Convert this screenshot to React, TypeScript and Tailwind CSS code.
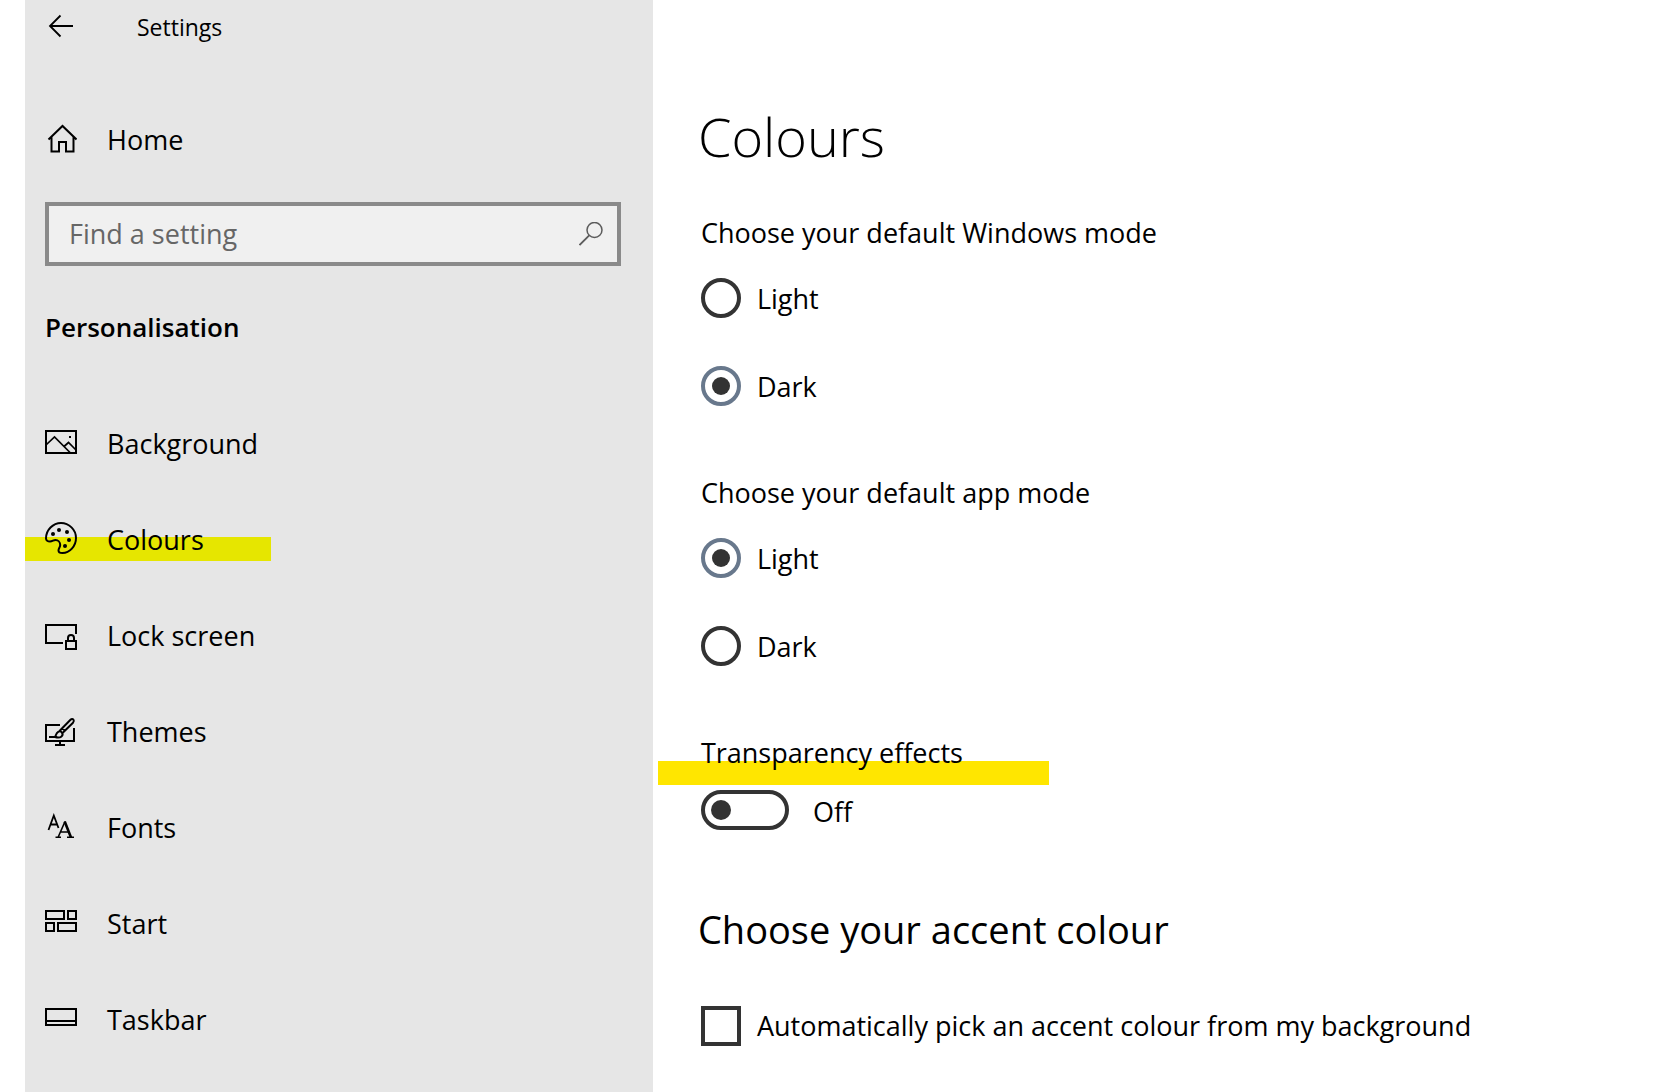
import React from "react";

type IconProps = { children: React.ReactNode };

function Icon({ children }: IconProps) {
  return (
    <svg
      viewBox="0 0 32 32"
      className="size-8 shrink-0"
      fill="none"
      stroke="currentColor"
      strokeWidth={2}
      aria-hidden="true"
    >
      {children}
    </svg>
  );
}

const BackIcon = () => (
  <Icon>
    <path d="M28 16H5M15.500 5.500L5 16l10.500 10.500" strokeWidth={1.8} />
  </Icon>
);

const HomeIcon = () => (
  <Icon>
    <path d="M3.500 16.500L17.500 3l14 13.500M6.500 14v14.500H14V19h7v9.500h7.500V14" />
  </Icon>
);

const PictureIcon = () => (
  <Icon>
    <path d="M1 5h30v22H1z" />
    <path d="M1.500 18.500L9.500 11 25.500 27M19 20.500l4.500-4 7.500 7.500" strokeWidth={1.7} />
    <path d="M24 11h2" />
  </Icon>
);

const PaletteIcon = () => (
  <Icon>
    <path d="M1 16.500C1 8 8 1 16 1s15 6.700 15 15-6.500 15-13.500 15c-2.500 0-4-1-4-2.500 0-2 1.700-3.500 1.700-5.500 0-3-2.200-5-4.700-5-2.200 0-3 1.500-5.500 1.500-2.300 0-4-1-4-3z" />
    <g fill="currentColor" stroke="none">
      <circle cx="8" cy="12" r="2" />
      <circle cx="14" cy="8" r="2" />
      <circle cx="22" cy="10" r="2" />
      <circle cx="24" cy="18" r="2" />
      <circle cx="20" cy="24" r="2" />
    </g>
  </Icon>
);

const LockScreenIcon = () => (
  <Icon>
    <path d="M18 25H1V7h30v9" />
    <path d="M21 23h10v8H21zM23 23v-3a3 3 0 0 1 6 0v3" />
  </Icon>
);

const ThemesIcon = () => (
  <Icon>
    <path d="M15 11H1v16h28V14M15 27v4M10 31h10" />
    <path d="M4 23h8" />
    <path
      d="M10 23c1-1.500 1-4 3.200-5.200 1.300-.7 3-.3 3.800.9.900 1.300.5 3-.8 4C14.500 24 12 23.500 10 23zM14.500 17L25.500 5.700c1-1 2.300-1 3 0s.5 2-.5 3L17 19.500M17.500 14.500l3 2.500"
      strokeWidth={2}
    />
  </Icon>
);

const FontsIcon = () => (
  <Icon>
    <path d="M3.500 20L8.800 5.500 13.500 18M5.500 14.500h7" strokeWidth={1.8} />
    <path d="M13 27.500L20 11.500M15.500 22h9M10.500 27.300h5.500M22 27.300h7" strokeWidth={1.600} />
    <path d="M19.700 11.500L26 27.500" strokeWidth={2.600} />
  </Icon>
);

const StartIcon = () => (
  <Icon>
    <path d="M1 5h18v8H1zM23 5h8v8h-8zM1 17h8v8H1zM13 17h18v8H13z" />
  </Icon>
);

const TaskbarIcon = () => (
  <Icon>
    <path d="M1 7h30v16H1zM1 19h30" />
  </Icon>
);

const SearchIcon = () => (
  <svg
    viewBox="0 0 24 24"
    className="size-6 shrink-0 text-[#5c5c5c]"
    fill="none"
    stroke="currentColor"
    strokeWidth={1.5}
    aria-hidden="true"
  >
    <circle cx="15.500" cy="8" r="7.500" />
    <path d="M10.200 13.300L.5 23" strokeWidth={1.8} />
  </svg>
);

const navItems = [
  { label: "Background", icon: PictureIcon },
  { label: "Colours", icon: PaletteIcon, marked: true },
  { label: "Lock screen", icon: LockScreenIcon },
  { label: "Themes", icon: ThemesIcon },
  { label: "Fonts", icon: FontsIcon },
  { label: "Start", icon: StartIcon },
  { label: "Taskbar", icon: TaskbarIcon },
];

function Sidebar() {
  return (
    <aside className="bg-[#e6e6e6]">
      <header className="flex h-[52px] items-center gap-[60px] pl-5">
        <button type="button" aria-label="Back">
          <BackIcon />
        </button>
        <span className="pt-0.5 text-[23px] leading-8">Settings</span>
      </header>

      <a href="#home" className="mt-[55px] flex h-16 items-center gap-[30px] pl-5">
        <HomeIcon />
        <span className="pt-0.5">Home</span>
      </a>

      <label className="mx-5 mt-[31px] mr-8 flex h-16 items-center border-4 border-[#8a8a8a] bg-[#f0f0f0] pr-3.5 pl-5">
        <input
          type="text"
          aria-label="Find a setting"
          placeholder="Find a setting"
          className="min-w-0 flex-1 bg-transparent outline-none placeholder:text-[#666666]"
        />
        <SearchIcon />
      </label>

      <h2 className="mt-[43px] pl-5 text-[26px] leading-9 font-semibold">Personalisation</h2>

      <nav className="mt-[49px]">
        {navItems.map(({ label, icon: ItemIcon, marked }) => (
          <a
            key={label}
            href={"#" + label.toLowerCase().replace(" ", "-")}
            className="relative isolate flex h-24 items-center gap-[30px] pl-5"
          >
            {marked && (
              <span className="absolute top-[47px] left-0 -z-10 h-6 w-[246px] bg-[#e6e600]" />
            )}
            <ItemIcon />
            <span className="pt-1">{label}</span>
          </a>
        ))}
      </nav>
    </aside>
  );
}

type ModeProps = { title: string; name: string; selected: "Light" | "Dark" };

function ModeChoice({ title, name, selected }: ModeProps) {
  return (
    <fieldset>
      <legend>{title}</legend>
      <div className="mt-[27px] flex flex-col items-start gap-12">
        {["Light", "Dark"].map((mode) => (
          <label key={mode} className="flex h-10 items-center gap-4">
            <input
              type="radio"
              name={name}
              defaultChecked={mode === selected}
              className="grid size-10 shrink-0 appearance-none place-items-center rounded-full border-4 border-[#333333] checked:border-[#68788c] checked:before:size-[18px] checked:before:rounded-full checked:before:bg-[#333333]"
            />
            <span className="pt-0.5">{mode}</span>
          </label>
        ))}
      </div>
    </fieldset>
  );
}

export default function App() {
  return (
    <div className="grid min-h-screen grid-cols-[23fr_37fr] bg-white pl-[25px] font-['Open_Sans','Noto_Sans',sans-serif] text-[27px] leading-9 text-black">
      <Sidebar />
      <main className="pt-[100px] pl-12">
        <h1 className="-ml-[3px] text-[54px] leading-[72px] font-[350]">Colours</h1>

        <div className="mt-[43px] flex flex-col gap-[69px]">
          <ModeChoice title="Choose your default Windows mode" name="windows-mode" selected="Dark" />
          <ModeChoice title="Choose your default app mode" name="app-mode" selected="Light" />

          <section className="relative isolate">
            <span className="absolute top-[26px] -left-[43px] -z-10 h-6 w-[391px] bg-[#ffe600]" />
            <h3 id="transparency">Transparency effects</h3>
            <label className="mt-[19px] flex h-10 items-center gap-6">
              <input
                type="checkbox"
                role="switch"
                aria-labelledby="transparency"
                className="flex h-10 w-[88px] shrink-0 appearance-none items-center rounded-full border-4 border-[#333333] bg-white px-1.5 before:size-5 before:rounded-full before:bg-[#333333] checked:justify-end"
              />
              <span className="pt-1">Off</span>
            </label>
          </section>
        </div>

        <h2 className="mt-[73px] -ml-[3px] text-[38px] leading-[52px]">Choose your accent colour</h2>
        <label className="mt-[51px] flex h-10 items-center gap-4">
          <input
            type="checkbox"
            className="size-10 shrink-0 appearance-none border-4 border-[#333333] checked:bg-[#68788c]"
          />
          <span>Automatically pick an accent colour from my background</span>
        </label>
      </main>
    </div>
  );
}
